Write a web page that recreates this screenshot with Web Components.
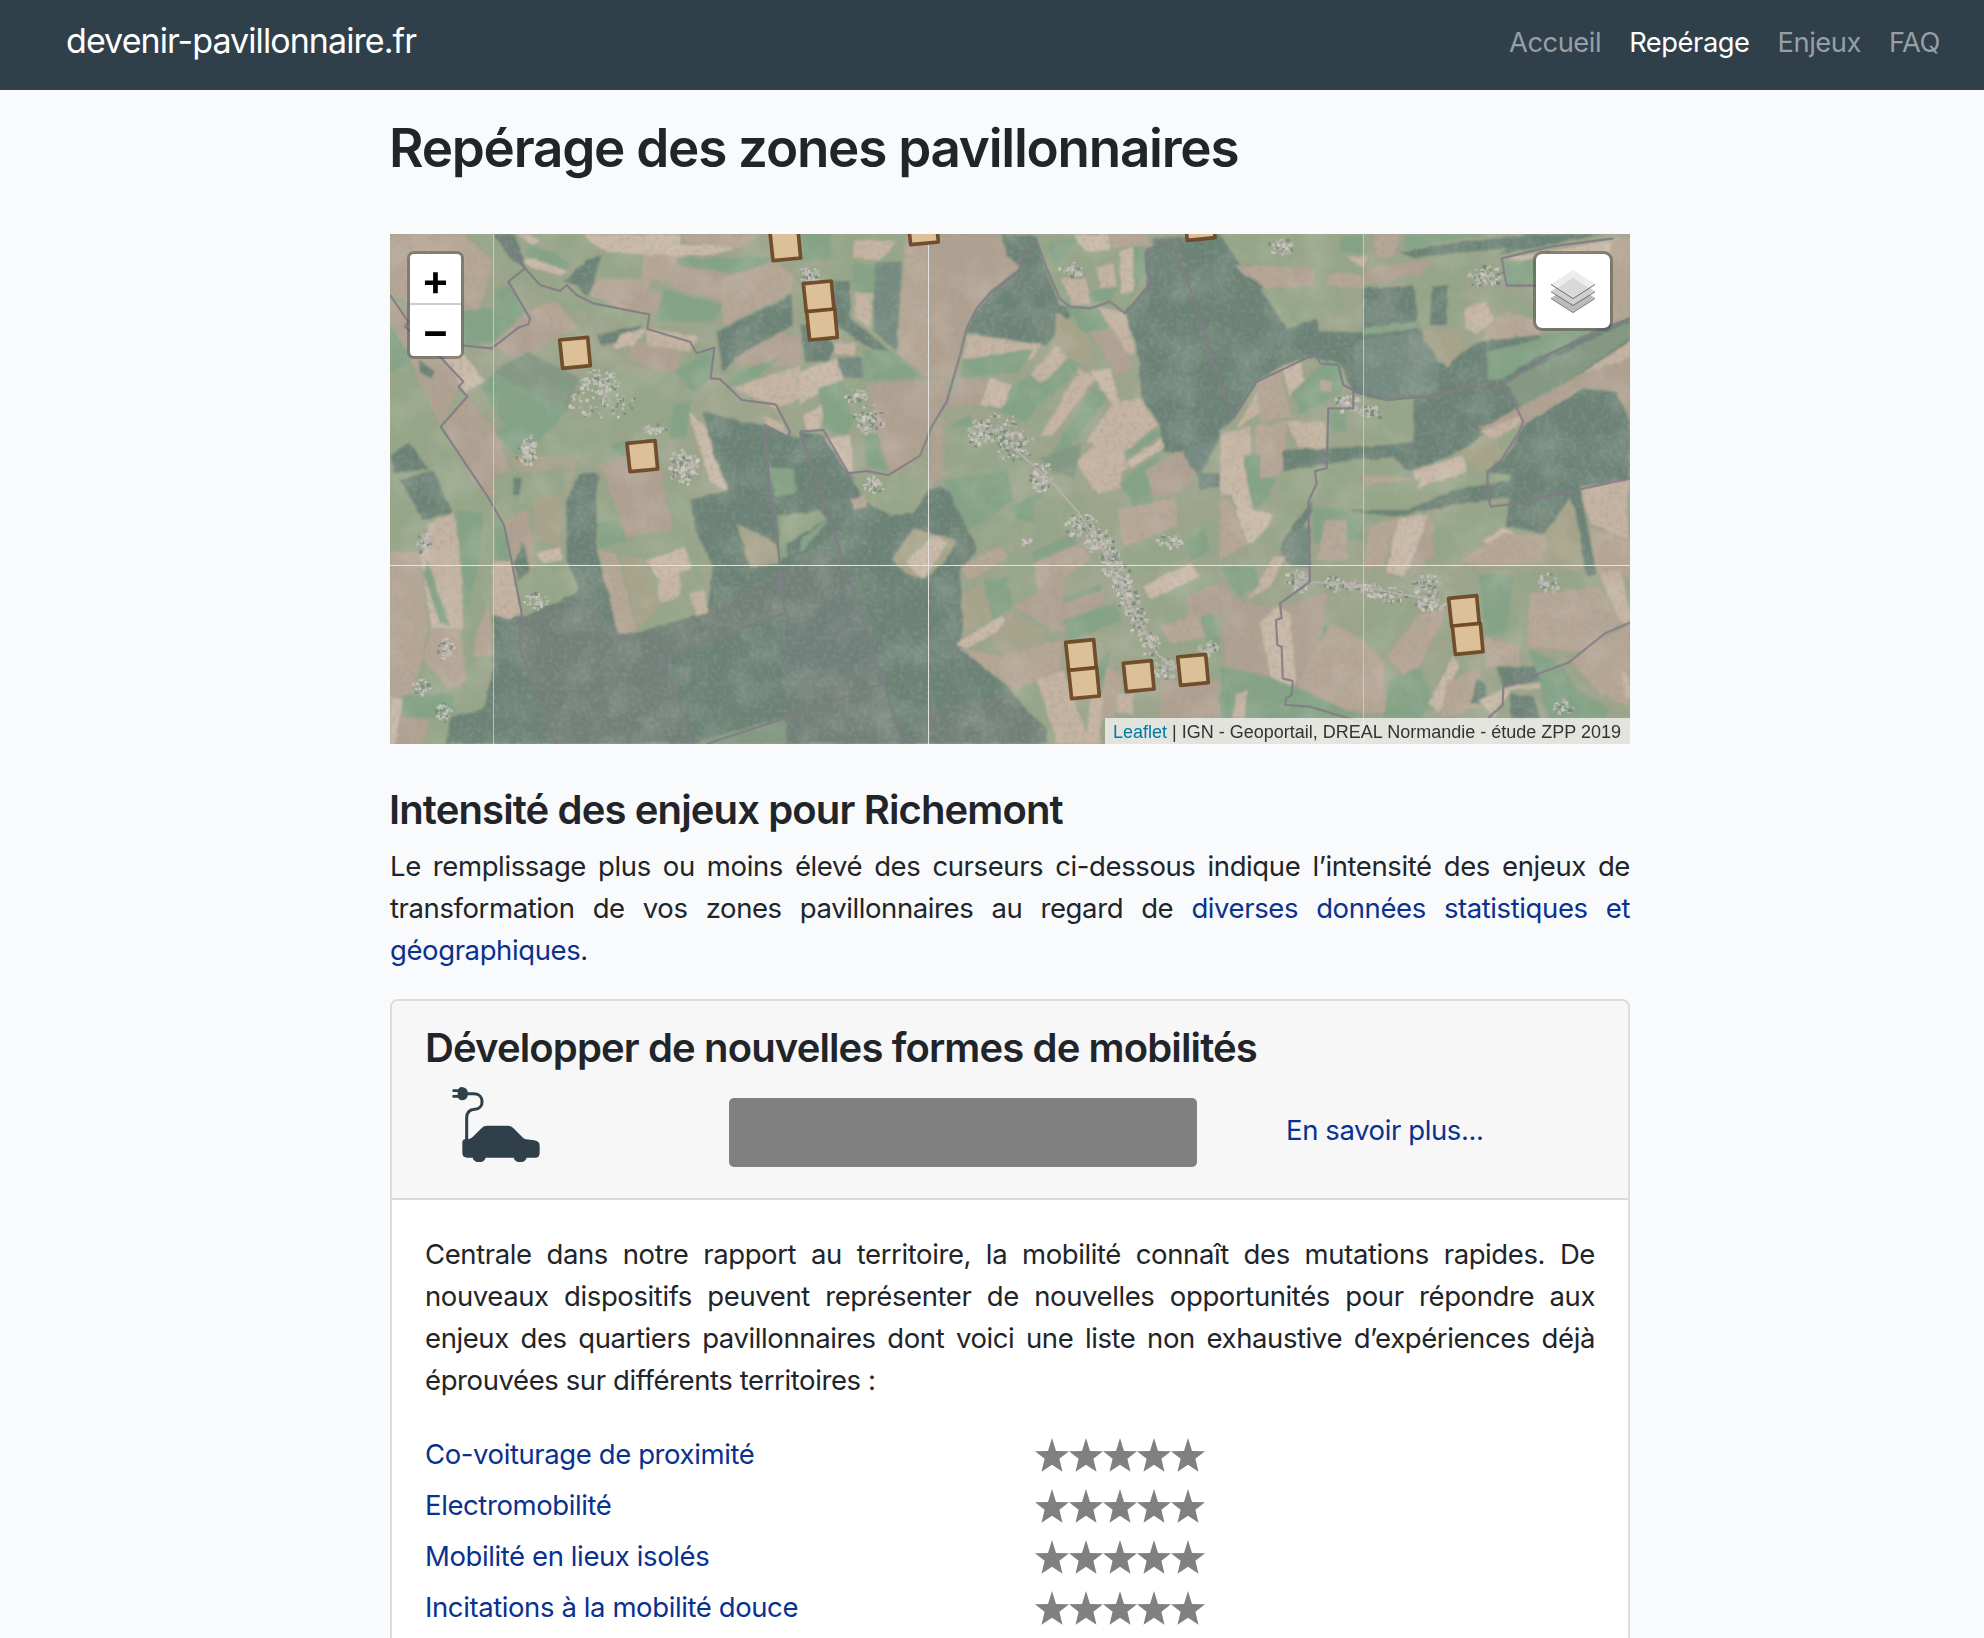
<!DOCTYPE html>
<html lang="fr">
<head>
<meta charset="utf-8">
<title>devenir-pavillonnaire.fr</title>
<style>
html,body{margin:0;background:#f8fafc}
body{font-family:Inter,"Liberation Sans",sans-serif;font-size:27.5px;line-height:42px;letter-spacing:-.4px;color:#212529;width:1984px;height:1638px;overflow:hidden}
</style>
</head>
<body>
<dp-page></dp-page>
<script>
const define = (name, html, setup) => customElements.define(name, class extends HTMLElement {
  connectedCallback() {
    if (this.shadowRoot) return;
    const root = this.attachShadow({mode: 'open'});
    const t = document.createElement('template');
    t.innerHTML = html;
    root.append(t.content.cloneNode(true));
    if (setup) setup(this, root);
  }
});

define('dp-navbar', `
<style>
:host{display:flex;box-sizing:border-box;height:90px;background:#2f404b;padding:0 44px 0 66px;justify-content:space-between;align-items:flex-start}
.brand{font-size:34px;line-height:52px;letter-spacing:-.93px;color:#fff;margin-top:15px;text-decoration:none}
nav{display:flex;gap:28px;margin-top:22px}
</style>
<a class="brand">devenir-pavillonnaire.fr</a>
<nav><slot></slot></nav>`);

define('dp-navlink', `
<style>
:host{display:block;font-size:27.3px;line-height:42px;letter-spacing:-.45px;color:#979fa5}
:host([active]){color:#fff}
</style><slot></slot>`);

define('dp-heading', `
<style>
:host{display:block;font-weight:600;font-size:40px;line-height:50px;letter-spacing:-.87px;white-space:nowrap;position:relative;top:1px}
:host([level="1"]){font-size:53px;line-height:66px;letter-spacing:-1.25px}
</style><slot></slot>`);

define('dp-link', `<style>:host{display:inline;color:#0b318f}</style><slot></slot>`);

define('dp-stars', `
<style>:host{display:block;height:34px}svg{display:block}</style>
<svg width="170" height="34" fill="#808080"></svg>`, (el, root) => {
  root.querySelector('svg').innerHTML = [0, 1, 2, 3, 4].map(i =>
    `<path transform="translate(${i * 34} 0)" d="M17 0L21 13L34 13.2L24.4 20.8L27.5 33.7L17 26.8L6.5 33.7L9.6 20.8L0 13.2L13 13Z"/>`).join('');
});

define('dp-measure', `
<style>
:host{display:grid;grid-template-columns:610px auto;height:51px;line-height:51px;color:#0b318f}
dp-stars{margin-top:9px}
</style><span><slot></slot></span><dp-stars></dp-stars>`);

define('dp-electric-car', `
<style>:host{display:block;width:88px;height:76px}svg{display:block}</style>
<svg width="88" height="76" viewBox="217 290 264 228">
<g fill="#2f404b"><rect x="218" y="297" width="22" height="8" rx="3"/><rect x="218" y="314" width="22" height="8" rx="3"/>
<path d="M234 301Q237 291 246 290Q260 291 264 303V317Q260 330 247 330Q237 329 234 319Z"/>
<path d="M248 456Q249 446 260 446H268Q274 445 279 440L303 416Q311 406 321 406H384Q393 406 400 412L430 442Q433 446 439 447L464 450Q480 453 480 466V487Q480 502 467 502H441A20 17 0 0 1 402 502H318A20 17 0 0 1 279 502H263Q248 502 248 488Z"/></g>
<path d="M260 310H284C313 310 316 355 286 357C268 358 261 367 261 383V448" fill="none" stroke="#2f404b" stroke-width="9"/>
</svg>`);

define('dp-issue-card', `
<style>
:host{display:block;box-sizing:border-box;height:700px;border:2px solid #dbdcde;border-radius:8px;background:#fff;overflow:hidden}
header{box-sizing:border-box;height:199px;background:#f7f7f7;border-bottom:2px solid #d9dadb;padding:21px 33px 0}
.row{display:grid;grid-template-columns:277px 468px 89px auto;align-items:start;padding-left:27px}
dp-electric-car{margin-top:15px}
.gauge{height:69px;margin-top:26px;border-radius:5px;background:#808080}
.more{grid-column:4;margin-top:37px}
.body{padding:33px 33px 0}
</style>
<header><dp-heading><slot name="title"></slot></dp-heading>
<div class="row"><dp-electric-car></dp-electric-car><div class="gauge"></div><dp-link class="more">En savoir plus...</dp-link></div></header>
<div class="body"><slot></slot></div>`);

define('dp-zoom-control', `
<style>
:host{display:flex;flex-direction:column;width:51px;height:102px;border:3px solid rgba(75,72,70,.45);border-radius:7px;background:#fff;background-clip:padding-box;color:#000}
span{height:50px;font-weight:600;font-size:43px;line-height:50px;text-align:center;letter-spacing:0}
.in{height:49px;border-bottom:2px solid #ccc}
</style><span class="in">+</span><span>−</span>`);

define('dp-layers-control', `
<style>
:host{display:flex;align-items:center;justify-content:center;width:74px;height:74px;border:3px solid rgba(75,72,70,.5);border-radius:9px;background:#fff;background-clip:padding-box}
svg{display:block}
</style>
<svg width="44" height="43" viewBox="993 135 132 129">
<path d="M993 219L1059 177L1125 219L1059 261Z" fill="#bcbcbc"/><path d="M993 219L1059 261L1125 219V222L1059 264L993 222Z" fill="#707070"/>
<path d="M993 199L1059 156L1125 199L1059 240Z" fill="#d0d0d0"/><path d="M993 199L1059 240L1125 199V202L1059 243L993 202Z" fill="#707070"/>
<path d="M993 177L1059 135L1125 177L1059 219Z" fill="#ededed"/><path d="M1013 188L1059 158L1105 188L1059 217Z" fill="#d9d9d9"/><path d="M993 177L1059 219L1125 177V180L1059 222L993 180Z" fill="#686868"/>
</svg>`);

/* Land cover, drawn sheet by sheet; each sheet has its own origin and three units per pixel. */
const C = {g:'#97a688', G:'#84a385', o:'#a8a48a', t:'#b1a191', T:'#b7a695', p:'#c6b3a1', P:'#cbb9a8', f:'#6c8276', F:'#748a80', d:'#728078', D:'#6f7f79', m:'#849882'};
const sheets = [
 [380, 225, `
T 30,27 340,27 340,110 300,250 250,260 250,90 90,80 90,240 30,205
g 250,27 345,27 560,190 820,270 780,300 560,250 420,170 340,110
f 340,27 400,27 440,130 400,110
t 30,205 90,285 90,400 30,290
G 250,255 345,250 345,350 250,365
G 345,200 385,175 440,265 340,355
t 345,350 440,260 590,300 440,395 375,395
T 440,260 520,225 600,310 560,330
g 30,290 90,400 180,600 290,810 30,810
G 30,300 90,390 110,410 30,440
f 30,690 90,650 180,790 160,810 60,810
t 90,400 180,390 245,470 180,600
P 185,385 240,375 318,470 255,500
G 300,480 380,420 560,560 480,655 370,600
m 340,440 440,380 600,460 560,560
G 340,620 450,560 500,660 420,700
t 190,600 260,520 340,600 400,760 400,810 310,810
o 400,700 530,640 600,680 560,810 420,810
P 410,27 500,27 460,60
G 440,60 580,100 550,140 440,110
P 440,95 560,135 540,155 430,115
g 450,27 640,27 630,100 590,130
P 610,27 900,27 900,60 1090,60 1000,90 700,90 640,60
T 910,27 1140,27 1080,70 910,50
f 625,100 670,90 660,150 620,220 590,180 550,170
g 670,80 800,90 780,160 640,160
T 795,90 900,90 880,170 785,160
G 890,100 1180,95 1080,170 890,160
T 645,160 820,165 750,260 630,210
t 760,200 850,200 820,270 750,260
G 850,190 1030,240 1000,290 830,290
t 880,120 1090,150 1030,230 860,185
T 1020,160 1180,110 1240,150 1240,200 1030,300
f 1010,320 1235,210 1238,300 1070,400 1030,440
t 1060,400 1200,320 1260,340 1260,420 1080,420
G 1070,440 1200,400 1100,480 1040,490
p 1060,490 1260,420 1260,520 1190,550
g 850,300 1000,370 1000,460 900,500 820,470
p 800,310 955,335 930,380 800,360
t 760,350 915,385 880,450 740,400
f 650,330 790,300 720,350 670,365
P 720,330 800,310 760,360 700,370
G 880,440 1000,370 990,460 940,500
g 640,420 830,460 920,540 880,640 760,640 620,570
G 880,540 930,530 920,640 870,640
g 440,690 560,560 740,640 760,740 640,700
G 690,660 760,640 770,740
t 660,720 740,690 850,740 860,810 700,810
f 600,760 640,740 670,810 570,810
P 925,560 990,620 1050,800 990,770
f 970,560 1090,590 1150,600 1260,640 1260,810 1050,810 1000,680
p 1150,575 1210,600 1225,635 1160,600
G 1165,740 1230,720 1260,760 1260,810 1190,800
f 405,740 425,740 422,805 402,805
f 115,405 165,440 150,460 120,440`],
 [800, 225, `
G 0,27 160,27 160,100 0,105
g 90,27 320,27 300,130 140,170 90,150
p 160,45 290,50 240,105 160,100
T 320,30 385,30 385,460 290,380
t 385,30 600,30 660,125 560,215 500,320 460,455 385,455
f 0,300 20,290 110,360 80,410 20,410
f 100,165 150,165 150,280 360,455 180,350 100,290
G 155,120 310,110 300,210 160,200
F 225,110 305,110 290,380 220,320
p 165,205 220,205 210,310 165,280
g 0,30 8,175 20,300 0,290
G 190,370 280,380 360,455 190,470
F 110,400 185,395 190,460 125,455
p 100,350 170,350 165,390 105,390
P 0,440 110,400 130,460 0,540
G 55,490 130,465 160,590 140,630 70,615
g 130,470 250,480 280,590 230,640 160,600
t 200,480 440,460 440,540 400,620 360,700 270,745 230,620
P 10,570 70,540 60,610 20,615
P 70,640 150,630 160,740 140,740
G 190,640 230,620 260,740 200,720
f 0,620 70,630 145,745 200,810 0,810
f 605,27 710,35 735,130 780,240 830,250 740,362 500,322 520,270 570,205 660,125 620,90
g 710,50 820,27 960,27 1040,70 1050,170 970,260 850,250 785,220
G 850,27 740,60 770,120 800,80
G 1000,60 1040,70 1040,130 990,220
P 820,30 920,27 930,75 860,80
p 890,125 940,115 950,185 900,190
P 960,80 1000,65 1000,200 965,205
T 920,27 1040,27 1050,60 940,70
G 870,200 960,180 930,230 880,230
p 780,160 860,160 870,240 820,240
G 800,250 900,245 920,310 850,325
p 895,245 980,265 1005,390 970,380
t 870,320 940,310 1000,430 950,450
o 770,260 860,330 880,400 820,430 760,370
p 505,330 720,360 700,400 490,400
G 490,405 700,370 660,440 480,460
p 690,450 770,360 800,400 730,480
G 720,480 810,400 840,420 720,560
p 840,430 885,460 760,630 720,635
G 885,480 920,520 800,680 750,690
P 870,440 930,430 960,530 930,530
t 480,460 560,470 540,540 440,540
G 550,540 690,450 740,500 680,590
P 570,460 635,480 610,550 540,540
p 940,530 1020,520 1075,600 960,690 860,650
g 690,590 760,490 740,600 700,640
G 455,600 510,570 530,640 490,640
t 400,620 480,540 430,600 430,760 385,790 385,690
g 440,610 520,600 700,690 620,810 440,810
m 720,700 850,650 820,760 760,740
f 975,260 1040,190 1035,80 1110,40 1260,27 1260,640 1150,680 1090,680 1080,600 1025,515 1015,390
G 960,690 1075,610 1080,630 970,710
p 830,710 890,650 970,670 980,730 880,795
P 980,710 1085,640 1090,670 990,730
G 990,740 1090,680 1050,740 960,810
t 1030,740 1140,680 1190,750 1130,810 1040,810
F 1145,680 1260,640 1195,755
f 1200,755 1260,755 1260,785 1195,785`],
 [1220, 225, `
f 0,40 70,90 170,230 200,310 290,280 300,390 190,420 110,470 40,580 0,620
f -200,40 0,30 60,100 0,300 -200,300
g 0,27 430,27 430,180 360,180 200,120 60,120
T 40,120 290,130 270,190 150,200
g 120,190 360,180 370,260 200,310
t 220,130 270,120 275,180 220,175
T 330,140 430,150 430,190 320,180
G 360,40 430,30 430,85 370,80
T 465,27 540,27 520,100 470,95
f 540,80 730,50 950,27 1150,27 840,90 640,130
G 560,27 800,27 640,60 550,75
p 380,95 440,90 430,130
g 440,110 860,70 700,200 430,180
t 440,130 640,100 600,150 430,180
T 445,190 560,175 530,220 450,250
f 430,190 600,180 590,290 430,310
g 580,180 740,170 735,310 600,310
f 635,185 685,180 680,300 630,300
P 850,100 1180,45 1180,80 950,110
G 855,115 950,100 950,180 865,180
T 1170,30 1230,40 1230,270 1170,300
p 735,250 790,230 825,280 770,330 735,310
T 800,310 860,260 960,290 960,330 790,350
g 790,210 860,200 950,250 950,290
f 200,320 440,320 600,310 620,400 680,420 770,350 960,330 1070,330 1230,280 1230,350 900,560 700,690 560,740 500,660 580,650 580,520 480,525 400,500 360,420 290,400
F 400,350 600,320 660,420 650,500 500,525 410,490
G 430,310 600,290 600,310 430,330
o 600,315 730,315 720,390 680,425 640,380
G 800,380 960,340 960,390 850,460 805,465
G 960,330 1130,310 1000,380 960,390
m 850,470 1230,290 1230,340 910,560 870,490
p 910,560 1230,350 1230,400 910,600
t 780,610 1100,440 1230,400 1230,590 1180,500 1080,490 920,590 850,640
f 920,590 1090,490 1190,500 1230,590 1230,770 1080,780 850,810 800,740 870,680
T 110,470 180,430 215,580 120,590
P 185,430 240,405 260,490 210,510
G 215,500 330,400 360,420 370,500 240,570
T 300,465 335,465 335,500 300,500
p 50,605 110,500 120,560 60,605
p 0,630 90,600 95,680 0,745
T 105,600 200,590 190,750 120,770
p 200,590 315,590 320,670 240,670
G 325,560 380,550 380,620 330,620
f 190,675 430,665 560,655 540,690 320,735 190,740
g 430,540 580,520 580,650 430,660
G 65,690 120,690 120,800 80,810
P 0,740 70,690 90,810 0,810
g 180,740 430,700 600,740 560,810 180,810
T 430,750 580,760 580,810 430,810
P 580,740 730,690 740,740 590,790
o 720,680 820,620 850,690 780,740
p 780,620 910,570 900,600 830,640
g 830,640 900,600 850,710 840,680
g 600,790 800,740 870,750 880,810 600,810
p 1080,790 1230,760 1230,810`],
 [380, 480, `
g 30,-20 230,-40 345,100 340,530 230,700 200,792 30,792
f 60,0 160,-30 218,100 130,120
p 145,130 220,100 240,210 250,450 200,440 130,220
T 30,215 120,215 145,450 100,640 30,650
P 120,215 145,220 165,350 215,445 155,445
G 140,240 210,440 180,430 130,280
G 230,90 310,100 300,250 260,380 240,240
T 150,450 240,450 260,600 220,640 130,540
T 290,460 330,360 340,530 280,530
G 65,650 200,640 300,650 200,715 70,710
P 30,650 70,650 45,792 30,792
t 60,710 150,715 130,792 45,792
g 210,620 310,630 310,690 230,710
f 340,405 430,410 590,340 650,210 720,440 960,410 980,395 1000,260 920,100 930,60 1050,30 1080,-60 1200,-80 1260,-60 1260,792 200,792 210,710 310,690 340,570
d 420,410 600,360 720,465 860,450 1220,260 1260,240 1260,370 850,535 900,640 940,792 530,792 430,520
f 560,60 600,-20 650,-20 740,130 650,210 660,320 600,330 560,240
g 340,-20 560,-30 550,70 540,200 590,330 420,400 380,300
G 345,110 370,120 390,240 345,240
t 375,120 440,90 470,260 410,300
p 340,245 395,240 425,400 390,415 340,405
f 400,250 430,180 450,270 415,300
f 400,-10 425,-10 420,45 400,45
o 460,60 550,40 540,200 460,180
P 470,220 540,200 550,240 490,250
g 410,300 560,260 595,330 430,400
g 650,0 920,-10 960,240 985,395 760,460 710,440 650,210
G 655,130 710,120 740,180 660,205
t 680,0 840,-20 880,150 740,170
T 655,210 710,220 770,455 715,465
P 800,240 915,200 935,265 840,305
p 830,310 900,280 900,350 840,370
p 925,340 975,330 985,395 950,410
o 720,220 800,240 840,380 770,450
G 1165,-40 1240,-30 1250,40 1185,50
o 1070,130 1190,190 1200,250 1110,260
G 1190,110 1290,80 1290,200 1200,240
m 960,780 1260,700 1260,792 960,792`],
 [800, 480, `
f -40,60 50,-30 150,-20 270,105 340,100 385,30 420,20 500,60 530,210 480,270 490,440 480,500 640,640 740,740 740,792 -40,792
d -40,270 90,200 130,250 230,600 310,792 -40,792
D -40,380 140,330 220,560 -40,640
d 390,690 640,640 740,740 720,792 310,792
g 160,0 380,-20 340,95 260,100 190,60
T 150,60 200,40 200,80 160,90
g -60,110 60,90 80,120 -60,200
G 0,180 80,120 80,130 0,220
o 275,240 340,145 470,180 440,240 370,300 320,280
P 320,250 400,160 440,190 370,298
G 430,0 620,-30 640,60 510,160
g 500,150 640,90 700,150 560,230
G 630,80 730,30 710,130 660,120
g 700,60 850,50 860,130 700,200
G 690,220 820,160 830,190 700,250
T 700,250 840,190 870,240 720,340
T 480,260 600,200 620,230 510,305
o 485,345 560,300 580,420 490,460
G 550,300 620,290 640,380 580,420
g 620,230 690,200 720,350 640,370
t 720,330 790,250 790,460 640,380
P 470,490 600,410 640,430 500,505
o 570,480 640,390 740,460 720,500 620,535
T 475,505 600,530 740,490 790,480 780,570 650,630
p 710,600 790,570 870,792 770,792
g 640,640 710,600 770,780 740,740 690,700
G 790,420 950,370 970,420 810,480
G 790,360 900,310 900,340 790,370
t 780,370 920,330 900,380 790,420
p 870,650 910,640 900,792 860,792
G 890,560 930,510 920,610 890,610
T 920,560 970,590 940,714 900,714
p 950,640 1000,640 1000,700 950,700
t 1080,600 1260,600 1260,714 1080,714
g 1000,480 1260,450 1260,600 1080,600
T 950,90 1130,50 1130,140 970,200
p 860,0 960,-30 970,20 900,40
G 960,10 1040,-20 1060,70 1000,80
g 930,220 1240,120 1260,200 940,310
G 1160,180 1220,150 1230,220 1170,240
P 1030,320 1170,250 1200,290 1050,360
g 1040,360 1260,270 1260,420 1050,420
t 1160,350 1260,310 1260,400 1170,420
T 1080,440 1200,400 1220,470 1110,490
G 1200,410 1240,400 1260,490 1230,500
F 1195,-20 1260,-20 1260,15 1200,30`],
 [1220, 480, `
P 20,0 80,-10 100,90 160,100 120,180 80,190
G 80,0 170,-10 140,60 100,90
T 0,50 30,60 80,190 0,240
g 80,200 190,100 260,20 290,20 200,160
f 195,170 280,60 275,100 245,140 180,210
F 180,210 245,140 270,140 270,260 210,260
p 100,340 160,230 200,230 150,320 70,370
G 0,260 100,250 120,320 60,350
G 280,80 430,90 430,180 280,190
g 280,30 600,0 570,100 430,140
f 380,90 560,90 700,30 880,0 1220,0 870,50 700,75 520,110
T 315,120 380,120 380,240 290,240
T 450,140 535,110 490,260 430,260
P 535,115 625,105 585,220 550,290 498,275
t 620,110 690,100 650,220 570,290
g 640,110 870,70 850,140 720,230 640,240
f 870,0 1080,-10 1070,110 980,160 860,140
o 980,150 1050,55 1090,140 1095,290 970,240
f 1055,30 1080,30 1130,280 1100,290
p 1080,30 1220,0 1225,180 1110,130
T 1110,140 1230,180 1230,290 1130,280
P 785,185 850,140 885,160 830,200
T 720,240 850,160 980,165 970,250 780,260
p 1140,280 1200,270 1230,390 1230,430 1200,430
g 880,280 1100,270 1100,330 940,340 920,470 860,460
G 780,280 880,290 860,460 790,470
T 930,340 1140,320 1200,430 1100,520 920,500
P 120,430 170,380 210,400 235,600 215,620 150,590
t 180,380 320,340 300,510 430,540 430,680 230,620 210,400
t 0,310 70,370 170,380 120,430 150,590 20,580
G 300,510 310,440 340,430 320,520
T 330,430 430,480 490,540 500,700 380,690 230,620
g 430,380 580,370 490,540 430,480
T 500,530 600,400 680,390 580,600 550,580
g 540,410 590,380 500,530 480,520
G 510,600 600,560 640,670 600,714 490,714
P 625,670 700,525 718,560 655,700
T 680,610 780,560 780,680 660,714
T 790,470 900,500 900,550 800,560
f 830,560 950,560 965,600 850,625
f 770,600 800,610 790,670 750,670
P 780,660 860,620 960,610 960,625 870,630 820,714
f 870,640 940,650 960,714 870,714
G 920,500 1030,560 1060,620 1170,690 1150,714 980,714 960,600
T 1050,540 1230,430 1230,690 1130,630
p 1205,570 1230,600 1230,660 1215,650
G 0,560 150,590 380,690 430,714 0,714
p 50,640 80,630 75,714 40,714`]
];
const roads = [
 [380,225,'30,210 85,290 75,305 180,395 250,470 235,485 262,515 182,605 320,810 372,900 395,1010 425,1165 418,1265 528,1560'],
 [380,225,'345,27 435,130 480,180 540,198 560,180 590,210 640,235 808,268 802,312 930,350 950,385 1003,368 992,460 1020,462 1085,525 1187,538 1230,620 1222,635 1155,600 1170,810 1190,930 1215,1165 1110,1200 850,1300 940,1560'],
 [380,225,'435,130 385,170 450,280 445,298 415,308 335,370 250,362'],
 [800,225,'0,620 70,615 145,745 200,738 265,750 360,692 395,605 440,530 480,390 500,310 530,250 570,203 655,140 662,118 655,100 710,70'],
 [800,225,'710,50 740,130 780,222 810,245 870,250 930,230 975,265 1055,170 1040,140 1040,75 1115,45 1180,220 1260,480 1300,580'],
 [800,225,'0,620 85,870 130,1010 250,1370 310,1560'],
 [1220,225,'40,580 110,470 290,385 300,415 355,420 370,480 400,495 400,550 325,550 320,730 285,738 290,775 265,830 270,1070 180,1135 185,1180 168,1185 172,1260 185,1265 188,1360 218,1368 215,1410 198,1420 196,1440 270,1445 420,1490'],
 [1220,225,'400,500 500,525 620,515 760,485 815,492 850,478 1000,380 1230,280'],
 [1220,225,'855,480 910,590 895,625 840,710 803,740 803,810 812,845 870,838 1230,760'],
 [1220,225,'1180,40 990,65 845,100 860,182 950,182'],
 [1220,480,'1230,428 1155,460 1045,548 945,585 850,620 848,675 805,714'],
 [380,480,'980,792 1260,700 1510,610'],
];
const towns = [[600,400,34,18],[600,380,20,12],[525,452,11,12],[527,443,8,10],[685,460,12,8],[655,428,12,5],[682,465,15,20],[423,540,7,13],[445,648,9,11],[421,686,10,8],[442,712,8,9],[535,600,12,8],
 [808,273,12,10],[855,394,12,8],[868,418,16,15],[978,432,12,14],[1000,428,20,16],[1015,445,22,16],[1040,476,12,16],[1070,268,12,7],[873,484,12,9],
 [1080,525,18,12],[1097,540,14,15],[1109,560,11,16],[1120,580,11,18],[1127,600,10,16],[1138,623,9,16],[1150,645,9,14],[1165,668,14,10],[1025,540,6,4],[1168,540,14,7],[1207,647,12,7],
 [1280,245,14,9],[1484,276,18,11],[1346,402,12,10],[1295,580,12,13],[1333,582,10,8],[1360,585,18,6],[1385,594,20,8],[1425,585,14,12],[1428,603,16,8],[1547,582,11,10],[1562,705,10,8],[1370,410,12,7]];
const zones = [[380,225,539,345],[380,225,741,655],[380,225,1170,22],[800,225,10,176],[800,225,20,260],[800,225,323,-26],[800,225,1153,-39],[800,480,797,487],[800,480,806,571],[800,480,970,550],[800,480,1133,531],[1220,480,686,355],[1220,480,697,438]];

define('dp-aerial-map', `
<style>:host{display:block}svg{display:block}</style>
<svg width="1240" height="510" viewBox="390 234 1240 510">
<defs>
<filter id="soft" x="0" y="0" width="100%" height="100%"><feTurbulence type="fractalNoise" baseFrequency=".08" numOctaves="2" seed="8" result="n"/><feDisplacementMap in="SourceGraphic" in2="n" scale="4" xChannelSelector="R" yChannelSelector="G"/><feGaussianBlur stdDeviation=".9"/></filter>
<filter id="grain" x="0" y="0" width="100%" height="100%"><feTurbulence type="fractalNoise" baseFrequency=".22" numOctaves="3" seed="3"/><feColorMatrix values="0 0 0 0 .28  0 0 0 0 .35  0 0 0 0 .32  1.8 0 0 0 -.8"/></filter>
<filter id="tone" x="0" y="0" width="100%" height="100%"><feTurbulence type="fractalNoise" baseFrequency=".03" numOctaves="5" seed="12"/><feColorMatrix values="0 0 0 0 .8  0 0 0 0 .76  0 0 0 0 .68  1.5 0 0 0 -.62"/></filter>
<filter id="blur"><feGaussianBlur stdDeviation=".45"/></filter>
</defs>
<rect x="390" y="234" width="1240" height="510" fill="#9da58b"/>
<g id="land" filter="url(#soft)"></g>
<rect x="390" y="234" width="1240" height="510" filter="url(#grain)" opacity=".5"/>
<rect x="390" y="234" width="1240" height="510" filter="url(#tone)" opacity=".25"/>
<g id="towns" filter="url(#blur)"></g>
<g id="roads" fill="none" stroke="#827c87" stroke-width="6.5" stroke-linejoin="round" opacity=".9"></g>
<path d="M390 565.5H1630M928.5 234V744" stroke="#e4e4e2" stroke-width="1"/>
<path d="M493.5 234V744M1363.5 234V744" stroke="#d3d5cf" stroke-width="1" opacity=".75"/>
<g id="zones" stroke="#6a4626" stroke-opacity=".93" stroke-width="11" stroke-linejoin="round" fill="#dcc097"></g>
</svg>`, (el, root) => {
  let s = 41;
  const rnd = () => (s = (s * 16807) % 2147483647) / 2147483647;
  const at = (x, y) => `transform="translate(${x} ${y}) scale(.33333)"`;
  root.getElementById('land').innerHTML = sheets.map(([x, y, list]) =>
    `<g ${at(x, y)}>` + list.trim().split('\n').map(l => {
      const [c, ...pts] = l.trim().split(' ');
      return `<polygon fill="${C[c]}" points="${pts.join(' ')}"/>`;
    }).join('') + '</g>').join('');
  root.getElementById('towns').innerHTML = towns.map(([x, y, rx, ry]) => {
    let o = '';
    const n = Math.round(Math.min(60, rx * ry / 4) + 8);
    for (let i = 0; i < n; i++) {
      const a = rnd() * 6.28, r = Math.pow(rnd(), .7);
      const col = ['#d2cbc8', '#c8c0bf', '#c1b9b8', '#b5b3ae', '#76877a'][Math.floor(rnd() * 5)];
      o += `<rect x="${(x + Math.cos(a) * r * rx).toFixed(1)}" y="${(y + Math.sin(a) * r * ry).toFixed(1)}" width="${(1.5 + rnd() * 2.8).toFixed(1)}" height="${(1.5 + rnd() * 2.4).toFixed(1)}" fill="${col}" opacity=".8"/>`;
    }
    return o;
  }).join('') + '<path d="M1010 445L1050 480L1078 512L1100 545L1125 595L1158 655M1295 582L1345 583L1400 594L1440 600M1158 655L1180 670" fill="none" stroke="#b9b1ae" stroke-width="2.2" opacity=".85"/>';
  root.getElementById('roads').innerHTML = roads.map(([x, y, p]) => `<polyline ${at(x, y)} points="${p}"/>`).join('');
  root.getElementById('zones').innerHTML = zones.map(([x, y, a, b]) =>
    `<g ${at(x, y)}><path transform="translate(${a} ${b})" d="M0 0L84 -8L92 77L9 85Z"/></g>`).join('');
});

define('dp-map', `
<style>
:host{display:block;position:relative;width:1240px;height:510px;overflow:hidden}
dp-zoom-control{position:absolute;left:17px;top:17px}
dp-layers-control{position:absolute;right:17px;top:17px}
.credit{position:absolute;right:0;bottom:0;height:26px;padding:0 9px 0 8px;background:rgba(255,255,255,.7);font:18px/28px "Liberation Sans",Arial,sans-serif;letter-spacing:0;color:#333;white-space:nowrap}
.credit a{color:#0078a8}
</style>
<dp-aerial-map></dp-aerial-map><dp-zoom-control></dp-zoom-control><dp-layers-control></dp-layers-control>
<div class="credit"><a>Leaflet</a> | IGN - Geoportail, DREAL Normandie - étude ZPP 2019</div>`);

define('dp-page', `
<style>
:host{display:block}
main{display:flex;flex-direction:column;width:1240px;margin-left:390px;padding-top:24px}
main>dp-heading{margin-left:-1px}
dp-map{margin-top:54px}
.sub{margin-top:40px}
p{margin:0;text-align:justify}
.intro{margin:11px 0 28px}
.desc{margin-bottom:28px}
</style>
<dp-navbar><dp-navlink>Accueil</dp-navlink><dp-navlink active>Repérage</dp-navlink><dp-navlink>Enjeux</dp-navlink><dp-navlink>FAQ</dp-navlink></dp-navbar>
<main>
<dp-heading level="1">Repérage des zones pavillonnaires</dp-heading>
<dp-map></dp-map>
<dp-heading class="sub">Intensité des enjeux pour Richemont</dp-heading>
<p class="intro">Le remplissage plus ou moins élevé des curseurs ci-dessous indique l’intensité des enjeux de transformation de vos zones pavillonnaires au regard de <dp-link>diverses données statistiques et</dp-link> <dp-link>géographiques</dp-link>.</p>
<dp-issue-card>
<span slot="title">Développer de nouvelles formes de mobilités</span>
<p class="desc">Centrale dans notre rapport au territoire, la mobilité connaît des mutations rapides. De nouveaux dispositifs peuvent représenter de nouvelles opportunités pour répondre aux enjeux des quartiers pavillonnaires dont voici une liste non exhaustive d’expériences déjà éprouvées sur différents territoires :</p>
<dp-measure>Co-voiturage de proximité</dp-measure>
<dp-measure>Electromobilité</dp-measure>
<dp-measure>Mobilité en lieux isolés</dp-measure>
<dp-measure>Incitations à la mobilité douce</dp-measure>
</dp-issue-card>
</main>`);
</script>
</body>
</html>
